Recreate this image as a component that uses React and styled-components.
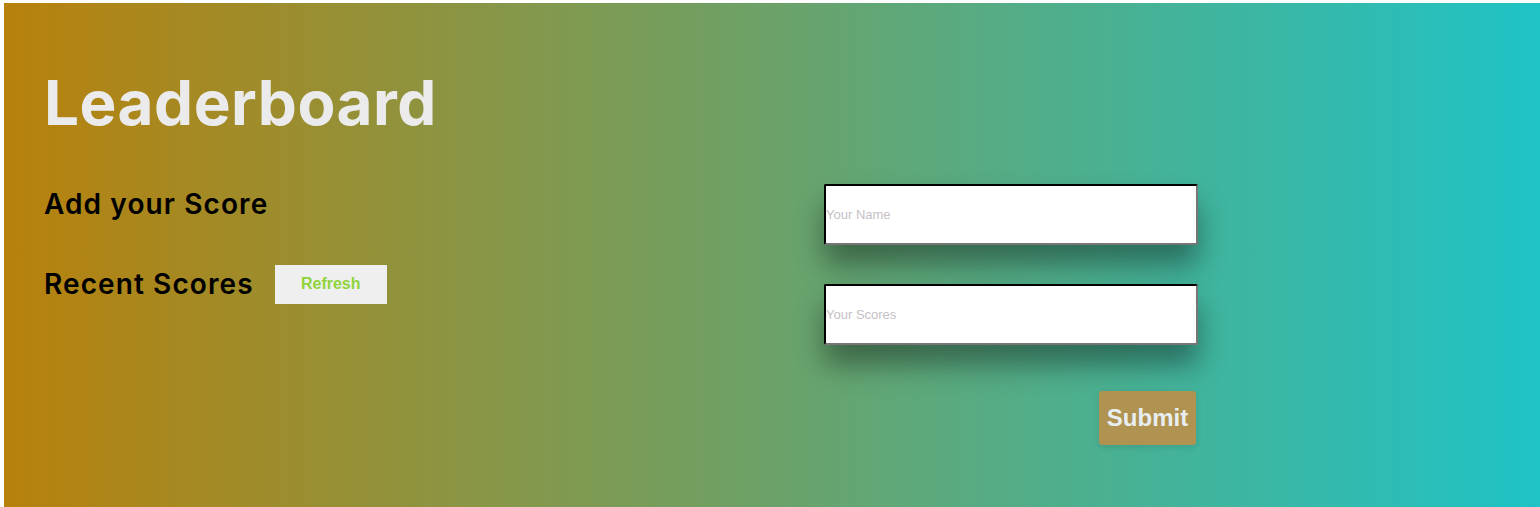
import styled, { createGlobalStyle } from "styled-components";

const Global = createGlobalStyle`
  body {
    margin: 3px 0 0 4px;
    font-family: Inter, "Noto Sans", sans-serif;
    overflow: hidden;
  }
`;

const Page = styled.div`
  min-height: 560px;
  padding: 62px 40px 0 40px;
  background: linear-gradient(to right, #b8810c 0%, #1fc3c6 100%);
`;

const Title = styled.h1`
  margin: 0;
  font-size: 62px;
  line-height: 75px;
  font-weight: 700;
  color: #ebebeb;
  letter-spacing: 0.5px;
`;

const Body = styled.div`
  display: grid;
  grid-template-columns: 780px 374px;
  margin-top: 44px;
`;

const Left = styled.div`
  display: flex;
  flex-direction: column;
  gap: 40px;
`;

const Heading = styled.h2`
  margin: 0;
  font-size: 28px;
  line-height: 40px;
  font-weight: 600;
  letter-spacing: 1.1px;
  color: #000;
`;

const Row = styled.div`
  display: flex;
  align-items: center;
  gap: 21px;
`;

const RefreshButton = styled.button`
  width: 112px;
  height: 39px;
  border: none;
  background: #efefef;
  color: #8fd43a;
  font-family: "Liberation Sans", Arial, sans-serif;
  font-weight: 700;
  font-size: 16px;
  cursor: pointer;
`;

const Form = styled.form`
  display: flex;
  flex-direction: column;
  gap: 39px;
`;

const Input = styled.input`
  box-sizing: border-box;
  width: 374px;
  height: 61px;
  padding: 0;
  border: 2px inset #767676;
  border-top-color: #222;
  border-left-color: #222;
  border-radius: 2px;
  background: #fff;
  font-family: "Liberation Sans", Arial, sans-serif;
  font-size: 13px;
  box-shadow: 0 20px 28px rgba(0, 0, 0, 0.38);
  outline: none;

  &::placeholder {
    color: #c6c1c6;
  }
`;

const SubmitButton = styled.button`
  align-self: flex-end;
  margin-right: 2px;
  margin-top: 7px;
  width: 97px;
  height: 54px;
  border: none;
  border-radius: 3px;
  background: #b09251;
  color: #e8eef0;
  font-family: "Liberation Sans", Arial, sans-serif;
  font-weight: 700;
  font-size: 24px;
  box-shadow: 0 2px 6px rgba(0, 0, 0, 0.12);
  cursor: pointer;
`;

export default function App() {
  return (
    <>
      <Global />
      <Page>
        <Title>Leaderboard</Title>
        <Body>
          <Left>
            <Heading>Add your Score</Heading>
            <Row>
              <Heading>Recent Scores</Heading>
              <RefreshButton type="button">Refresh</RefreshButton>
            </Row>
          </Left>
          <Form onSubmit={(e) => e.preventDefault()}>
            <Input type="text" placeholder="Your Name" />
            <Input type="number" placeholder="Your Scores" />
            <SubmitButton type="submit">Submit</SubmitButton>
          </Form>
        </Body>
      </Page>
    </>
  );
}
